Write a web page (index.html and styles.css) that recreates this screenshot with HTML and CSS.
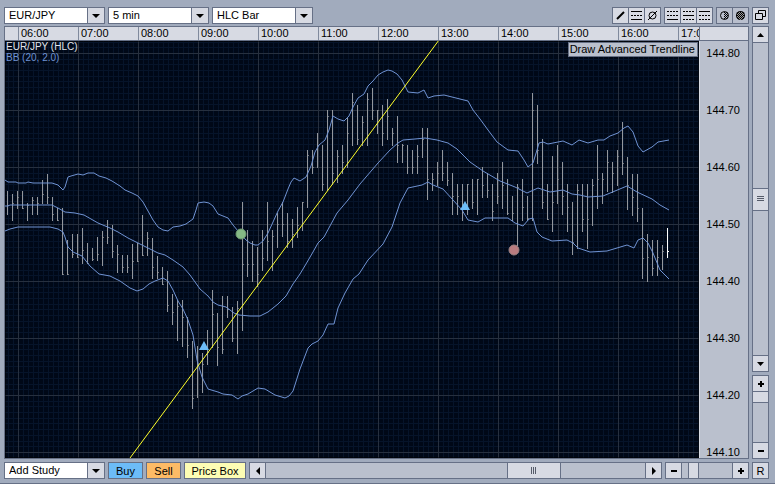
FILE: index.html
```
<!DOCTYPE html>
<html lang="en">
<head>
<meta charset="utf-8">
<title>EUR/JPY</title>
<link rel="stylesheet" href="styles.css">
</head>
<body>
<div class="app">
  <header class="toolbar">
    <span class="select"><select aria-label="Symbol"><option>EUR/JPY</option></select></span>
    <span class="select"><select aria-label="Interval"><option>5 min</option></select></span>
    <span class="select"><select aria-label="Bar type"><option>HLC Bar</option></select></span>
    <div class="tools">
      <div class="group">
        <button aria-label="Trendline"><svg width="15" height="15"><path class="thick" d="M4 11L11 4"/></svg></button>
        <button aria-label="Draw advanced trendline"><svg width="15" height="15"><path d="M2 3.500H13M2 11.500H13"/><path class="dash" d="M2 7.500H13"/></svg></button>
        <button aria-label="Remove lines"><svg width="15" height="15"><circle cx="7.500" cy="7.500" r="3.500"/><path d="M3 12L12 3"/></svg></button>
      </div>
      <div class="group">
        <button aria-label="Upper and lower lines"><svg width="15" height="15"><path class="dash" d="M2 3.500H13M2 7.500H13"/><path d="M2 11.500H13"/></svg></button>
        <button aria-label="Center line"><svg width="15" height="15"><path class="dash" d="M2 3.500H13M2 11.500H13"/><path d="M2 7.500H13"/></svg></button>
        <button aria-label="Top line"><svg width="15" height="15"><path class="dash" d="M2 7.500H13M2 11.500H13"/><path d="M2 3.500H13"/></svg></button>
      </div>
      <div class="group dark">
        <button aria-label="Half shading"><svg width="15" height="15"><circle cx="7.500" cy="7.500" r="4"/><path class="hatch" d="M7.500 4V11M8.500 5V11M9.500 4V11M10.500 5V10"/></svg></button>
        <button aria-label="Full shading"><svg width="15" height="15"><circle class="full" cx="7.500" cy="7.500" r="4.500"/><path class="hatch light" d="M4.500 6V10M5.500 5V11M6.500 4V11M7.500 5V12M8.500 4V11M9.500 5V11M10.500 6V10"/></svg></button>
      </div>
      <div class="group"><button aria-label="Detach window"><svg width="15" height="15"><path class="win" d="M5.500 2.500H12.500V8.500H5.500Z"/><path class="win" d="M2.500 5.500H9.500V11.500H2.500Z"/></svg></button></div>
    </div>
  </header>

  <main class="body">
    <section class="panel">
      <div class="times">
        <span>06:00</span><span>07:00</span><span>08:00</span><span>09:00</span><span>10:00</span><span>11:00</span><span>12:00</span><span>13:00</span><span>14:00</span><span>15:00</span><span>16:00</span><span>17:00</span>
      </div>
      <div class="corner"></div>
      <div class="chart">
        <svg class="plot" aria-label="EUR/JPY five minute chart">
          <defs>
            <pattern id="grid" x="13" y="12" width="60" height="57" patternUnits="userSpaceOnUse">
              <path class="minor" d="M5.500 0V57M10.500 0V57M15.500 0V57M20.500 0V57M25.500 0V57M30.500 0V57M35.500 0V57M40.500 0V57M45.500 0V57M50.500 0V57M55.500 0V57M0 6.500H60M0 11.500H60M0 17.500H60M0 23.500H60M0 28.500H60M0 34.500H60M0 40.500H60M0 46.500H60M0 51.500H60"/>
              <path class="major" d="M.5 0V57M0 .5H60"/>
            </pattern>
          </defs>
          <rect width="100%" height="100%" fill="url(#grid)"/>
          <g transform="translate(-5 -41)">
            <path class="ticks" id="ticks"/>
            <path class="bars" id="bars"/>
            <path class="bars last" d="M667.500 228V258M668 251.500H669"/>
            <polyline class="band" points="5,180 8,182 16,182 18,183 26,183 28,182 33,183 52,183 58,185 63,190 65,187 68,177 71,176 78,174 83,175 88,173 94,173 99,176 106,178 112,181 120,186 125,190 132,193 138,196 143,202 148,211 153,220 158,227 163,230 168,231 173,227 180,226 186,224 193,219 196,210 198,203 204,202 209,203 213,206 218,214 228,218 233,225 238,231 246,240 250,243 255,245 258,245 263,241 268,233 273,222 278,211 283,202 288,189 291,182 294,178 300,181 306,177 311,166 315,152 319,145 325,140 329,130 333,116 338,119 344,121 349,116 353,107 358,98 364,94 368,86 373,81 378,75 383,72 388,70 392,71 397,74 402,80 408,92 418,93 424,90 428,98 434,96 444,95 452,97 468,101 473,110 480,119 488,130 497,142 508,150 518,151 524,160 528,167 533,163 537,150 539,143 543,142 548,144 563,141 572,145 579,140 588,143 598,140 604,140 610,136 618,133 624,128 628,126 633,132 638,146 643,152 652,147 658,142 669,140"/>
            <polyline class="band" points="5,206 8,206 10,205 52,205 58,208 65,212 75,213 84,215 98,223 110,228 118,232 128,238 138,243 148,248 158,253 165,255 173,260 183,267 190,275 200,289 208,296 213,302 218,305 226,307 234,313 239,315 250,316 260,316 268,312 278,304 286,296 293,284 300,274 306,264 313,252 318,243 324,237 337,213 348,200 360,184 378,163 390,150 398,143 403,140 415,139 425,138 437,140 448,143 457,149 470,162 483,171 500,181 515,187 527,193 538,188 550,192 563,190 572,194 580,195 588,197 603,196 615,191 627,186 637,192 652,199 660,205 669,210"/>
            <polyline class="band" points="5,231 10,229 18,227 50,227 58,229 63,232 65,237 68,247 73,252 82,256 90,266 99,274 110,276 120,281 130,288 137,291 143,289 149,284 155,281 163,278 168,281 173,290 178,301 183,309 188,320 193,335 197,360 202,377 208,389 218,392 223,394 232,395 238,399 242,396 248,394 258,388 265,389 275,395 285,398 289,396 293,391 300,369 308,348 312,344 318,341 323,335 328,324 334,324 338,308 345,293 353,279 359,274 368,260 383,244 392,227 400,203 408,188 422,185 428,182 433,185 443,189 453,200 462,210 468,220 478,222 485,218 508,218 515,223 523,226 529,219 533,218 537,232 542,237 552,241 567,240 573,243 578,248 590,252 607,251 627,245 634,248 638,240 643,238 648,243 653,253 660,270 669,279"/>
            <path class="trend" d="M130 458L439 40"/>
            <circle class="green" cx="241" cy="234" r="5"/>
            <circle class="red" cx="514" cy="250" r="5"/>
            <path class="buy" d="M204 341L209 350H199ZM465 201L470 210H460Z"/>
          </g>
        </svg>
        <div class="legend"><div>EUR/JPY (HLC)</div><div class="study">BB (20, 2.0)</div></div>
        <div class="tip" role="tooltip">Draw Advanced Trendline</div>
      </div>
      <div class="prices">
        <span>144.80</span><span>144.70</span><span>144.60</span><span>144.50</span><span>144.40</span><span>144.30</span><span>144.20</span><span>144.10</span>
      </div>
    </section>
    <aside class="side">
      <div class="vbar scroll">
        <button aria-label="Scroll up"><svg width="7" height="4"><path class="solid" d="M0 4L3.500 0L7 4Z"/></svg></button>
        <div class="track"></div>
        <button class="thumb" aria-label="Price position"><svg width="7" height="6"><path class="grip" d="M0 .5H7M0 2.500H7M0 4.500H7"/></svg></button>
        <div class="track"></div>
        <button aria-label="Scroll down"><svg width="7" height="4"><path class="solid" d="M0 0H7L3.500 4Z"/></svg></button>
      </div>
      <div class="vbar zoom">
        <button aria-label="Zoom price in"><svg width="6" height="6"><path class="sign" d="M0 3H6M3 0V6"/></svg></button>
        <button class="thumb" aria-label="Price zoom level"></button>
        <div class="track"></div>
        <button aria-label="Zoom price out"><svg width="6" height="6"><path class="sign" d="M0 3H6"/></svg></button>
      </div>
    </aside>
  </main>

  <footer class="footer">
    <span class="select"><select aria-label="Add study"><option>Add Study</option></select></span>
    <button class="action blue">Buy</button>
    <button class="action orange">Sell</button>
    <button class="action yellow">Price Box</button>
    <div class="hbar scroll">
      <button aria-label="Scroll left"><svg width="4" height="8"><path class="solid" d="M4 0V8L0 4Z"/></svg></button>
      <div class="track before"></div>
      <button class="thumb" aria-label="Time position"><svg width="6" height="7"><path class="grip" d="M.5 0V7M2.500 0V7M4.500 0V7"/></svg></button>
      <div class="track"></div>
      <button aria-label="Scroll right"><svg width="4" height="8"><path class="solid" d="M0 0V8L4 4Z"/></svg></button>
    </div>
    <div class="hbar zoom">
      <button aria-label="Zoom time out"><svg width="6" height="6"><path class="sign" d="M0 3H6"/></svg></button>
      <div class="track before"></div>
      <button class="thumb" aria-label="Time zoom level"></button>
      <div class="track"></div>
      <button aria-label="Zoom time in"><svg width="6" height="6"><path class="sign" d="M0 3H6M3 0V6"/></svg></button>
    </div>
    <div class="group"><button>R</button></div>
  </footer>
</div>
<script src="chart.js"></script>
</body>
</html>
```
FILE: styles.css
```
* { box-sizing: border-box; }
body {
  margin: 0;
  background: #a1abbd;
  color: #000;
  font: 11px/16px "Liberation Sans", Arial, sans-serif;
}
.app {
  display: flex;
  flex-direction: column;
  height: 100vh;
  min-height: 400px;
  padding: 7px 6px 4px 4px;
  border-bottom: 1px solid #667086;
}
button {
  display: flex;
  align-items: center;
  justify-content: center;
  margin: 0;
  padding: 0;
  border: 0;
  background: #d7dae3;
  color: #000;
  font: inherit;
}
svg { display: block; fill: none; stroke: #000; }

.toolbar { display: flex; gap: 3px; height: 17px; margin-bottom: 2px; }
.select { position: relative; flex: none; width: 101px; height: 17px; }
.select select {
  display: block;
  width: 100%;
  height: 100%;
  padding: 0 18px 0 4px;
  border: 1px solid #667086;
  border-radius: 0;
  background: #fff;
  color: #000;
  font: inherit;
  line-height: 15px;
  appearance: none;
}
.select::before {
  content: "";
  position: absolute;
  top: 1px;
  right: 1px;
  bottom: 1px;
  width: 16px;
  border-left: 1px solid #667086;
  background: #d7dae3;
  pointer-events: none;
}
.select::after {
  content: "";
  position: absolute;
  top: 7px;
  right: 5px;
  border: 4px solid transparent;
  border-top-color: #000;
  border-bottom: 0;
  pointer-events: none;
}
.tools { display: flex; gap: 3px; margin-left: auto; }
.group {
  display: flex;
  gap: 1px;
  border: 1px solid #667086;
  background: #667086;
}
.group button { width: 15px; }
.group.dark button { background: #b9bfcd; }
.thick { stroke-width: 2; }
.dash { stroke-dasharray: 2 1; }
.hatch { stroke-dasharray: 1 1; }
.full { fill: #000; stroke: none; }
.light { stroke: #999; }
.win { fill: #d7dae3; }

.body { display: flex; flex: 1; gap: 3px; min-height: 0; }
.panel {
  display: grid;
  grid-template: 14px 1fr / 1fr 49px;
  flex: 1;
  min-width: 0;
  border: 1px solid #667086;
  background: #bac0cd;
}
.times {
  display: flex;
  min-width: 0;
  overflow: hidden;
  padding-left: 13px;
  border-bottom: 1px solid #667086;
  background: #d7dae3;
}
.times span { flex: none; width: 60px; padding-left: 2px; border-left: 1px solid #808a9d; line-height: 13px; }
.corner { border-left: 1px solid #667086; border-bottom: 1px solid #667086; background: #d7dae3; }
.chart { position: relative; min-width: 0; min-height: 0; overflow: hidden; background: #000817; }
.plot { position: absolute; inset: 0; width: 100%; height: 100%; }
.minor { stroke: #06142a; }
.major { stroke: #27303f; }
.bars { stroke: #94979c; shape-rendering: crispEdges; }
.ticks { stroke: #6d7178; shape-rendering: crispEdges; }
.last { stroke: #fff; }
.band { stroke: #6f92d2; }
.trend { stroke: #ffff2a; }
.green { fill: #85b985; stroke: #6f9b72; }
.red { fill: #b97c80; stroke: #998081; }
.buy { fill: #6cbcf8; stroke: none; }
.legend { position: relative; padding: 0 1px; color: #e2e5ea; font-size: 10px; line-height: 11px; }
.study { color: #6f92d2; }
.tip {
  position: absolute;
  top: 1px;
  right: 1px;
  padding: 0 2px 0 1px;
  border: 1px solid #667086;
  background: #bac0cd;
  line-height: 13px;
}
.prices {
  display: flex;
  flex-direction: column;
  gap: 45px;
  min-height: 0;
  padding: 6px 8px 0 0;
  overflow: hidden;
  border-left: 1px solid #d7dae3;
  line-height: 12px;
  text-align: right;
}

.side { display: flex; flex-direction: column; gap: 3px; width: 17px; flex: none; }
.vbar, .hbar { display: flex; gap: 1px; border: 1px solid #667086; background: #667086; }
.vbar { flex-direction: column; }
.vbar button { flex: none; height: 15px; }
.vbar.scroll { flex: 1; }
.vbar.zoom { height: 84px; }
.track { flex: 1; background: #bac0cd; }
.vbar.scroll .thumb { height: 21px; }
.vbar.zoom .thumb { height: 10px; }
.solid { fill: #000; stroke: none; }
.grip { stroke: #555b69; }
.sign { stroke-width: 2; }

.footer { display: flex; gap: 3px; height: 17px; margin-top: 3px; }
.action { flex: none; width: 35px; border: 1px solid #667086; }
.blue { background: #6cbcf8; }
.orange { background: #fdbb66; }
.yellow { width: 62px; background: #fdfdb4; }
.hbar button { flex: none; width: 15px; }
.hbar.scroll { flex: 1; }
.hbar.scroll .before { flex-grow: 241; }
.hbar.scroll .track:not(.before) { flex-grow: 84; }
.hbar.scroll .thumb { width: 52px; }
.hbar.zoom { width: 84px; }
.hbar.zoom .before { flex: none; width: 6px; }
.hbar.zoom .thumb { width: 9px; }
```
FILE: chart.js
```
// [high, low, close] of each bar, as vertical plot positions; bars are 5px apart
const bars = [
  [191,214,205],[194,220,203],[191,208,197],[191,208,208],[203,220,205],[197,214,200],[197,214,203],[180,203,194],[174,203,197],[197,220,214],
  [208,220,220],[208,274,274],[240,274,274],[234,257,254],[234,257,257],[228,263,250],[243,263,263],[248,260,259],[237,260,254],[231,265,237],
  [220,243,237],[225,257,251],[245,272,254],[255,272,267],[255,272,267],[244,278,261],[243,261,261],[215,255,255],[232,255,238],[238,278,267],
  [256,278,272],[267,284,284],[271,311,305],[294,324,312],[300,340,306],[300,346,317],[317,357,345],[341,408,398],[346,397,365],[353,392,364],
  [330,364,352],[290,347,314],[313,365,347],[296,353,349],[296,317,309],[307,341,338],[301,353,308],[202,330,264],[230,276,264],[241,281,264],
  [247,286,274],[230,270,258],[202,260,241],[230,270,236],[213,247,224],[202,236,224],[213,247,241],[219,247,234],[207,237,225],[202,230,202],
  [150,207,155],[150,173,167],[133,167,145],[145,190,184],[110,190,116],[110,184,173],[150,182,156],[145,173,162],[117,167,133],[93,145,102],
  [105,144,139],[116,145,122],[93,145,99],[88,119,110],[110,133,110],[105,145,133],[99,139,116],[128,145,133],[116,162,145],[144,162,145],
  [145,173,167],[150,173,167],[145,173,156],[128,157,139],[128,199,179],[173,190,179],[162,185,173],[150,180,173],[162,185,180],[173,214,196],
  [184,214,196],[184,220,208],[184,214,184],[179,208,202],[179,214,179],[167,197,185],[173,197,190],[184,220,211],[173,203,196],[162,208,185],
  [179,214,213],[196,220,213],[184,245,187],[179,220,207],[196,220,218],[93,220,110],[105,163,150],[139,208,202],[184,219,219],[156,231,202],
  [145,203,179],[162,214,196],[184,231,207],[202,254,242],[184,248,190],[184,231,219],[184,248,219],[179,225,185],[145,208,179],[173,203,179],
  [150,191,162],[162,192,173],[150,185,156],[122,174,163],[157,209,185],[174,215,197],[174,221,208],[208,278,258],[234,281,257],[240,275,268],
  [240,275,257],[245,269,251]
];

const left = i => 7.5 + i * 5;

document.getElementById("bars").setAttribute("d",
  bars.map(([high, low], i) => `M${left(i)} ${high}V${low + 1}`).join(""));
document.getElementById("ticks").setAttribute("d",
  bars.map(([high, low, close], i) => `M${left(i)} ${Math.min(close, low) + 0.5}h1.5`).join(""));
```
